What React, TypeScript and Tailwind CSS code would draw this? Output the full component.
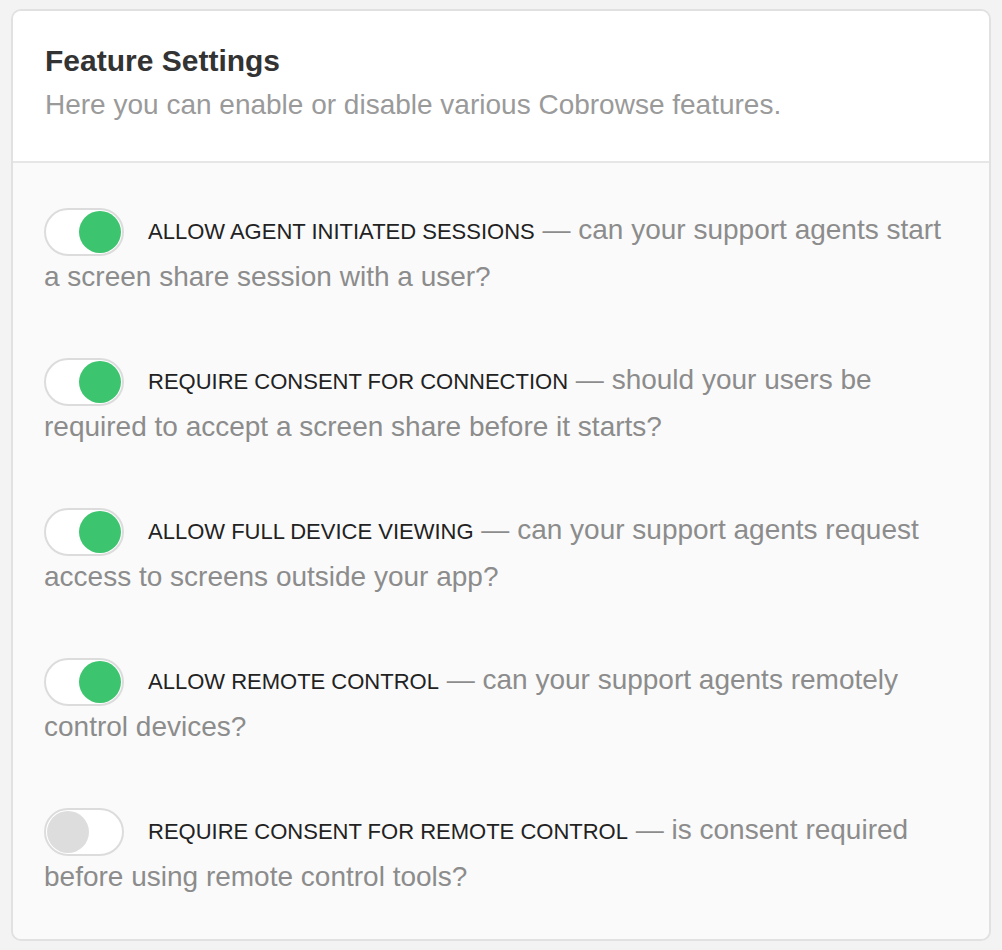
const features = [
  {
    label: "Allow agent initiated sessions",
    text: "can your support agents start a screen share session with a user?",
    on: true,
  },
  {
    label: "Require consent for connection",
    text: "should your users be required to accept a screen share before it starts?",
    on: true,
  },
  {
    label: "Allow full device viewing",
    text: "can your support agents request access to screens outside your app?",
    on: true,
  },
  {
    label: "Allow remote control",
    text: "can your support agents remotely control devices?",
    on: true,
  },
  {
    label: "Require consent for remote control",
    text: "is consent required before using remote control tools?",
    on: false,
  },
];

function Toggle({ on }: { on: boolean }) {
  return (
    <span className="relative -my-[2px] mr-[24px] inline-block h-[48px] w-[80px] rounded-full border-2 border-[#dcdcdc] bg-white align-middle">
      <span
        className={`absolute top-[1px] h-[42px] w-[42px] rounded-full ${
          on ? "right-[1px] bg-[#3cc46e]" : "left-[1px] bg-[#dddddd]"
        }`}
      />
    </span>
  );
}

export default function App() {
  return (
    <div className="min-h-[950px] bg-[#f3f3f3] pl-[11px] pt-[9px]" style={{ fontFamily: '"Liberation Sans", Arial, sans-serif' }}>
      <div className="w-[980px] overflow-hidden rounded-[10px] border-2 border-[#e1e1e1]">
        <div className="border-b-2 border-[#e6e6e6] bg-white px-[32px] pb-[36px] pt-[30px]">
          <h1 className="text-[30px] font-bold leading-[40px] text-[#333]">Feature Settings</h1>
          <p className="mt-[4px] text-[28px] leading-[40px] text-[#9a9a9a]">
            Here you can enable or disable various Cobrowse features.
          </p>
        </div>
        <div className="flex flex-col gap-[58px] bg-[#fafafa] px-[31px] pb-[40px] pt-[44px]">
          {features.map((f) => (
            <p key={f.label} className="text-[28px] leading-[45px] text-[#8c8c8c]">
              <Toggle on={f.on} />
              <span className="text-[22px] uppercase text-[#222]">{f.label}</span> — {f.text}
            </p>
          ))}
        </div>
      </div>
    </div>
  );
}
